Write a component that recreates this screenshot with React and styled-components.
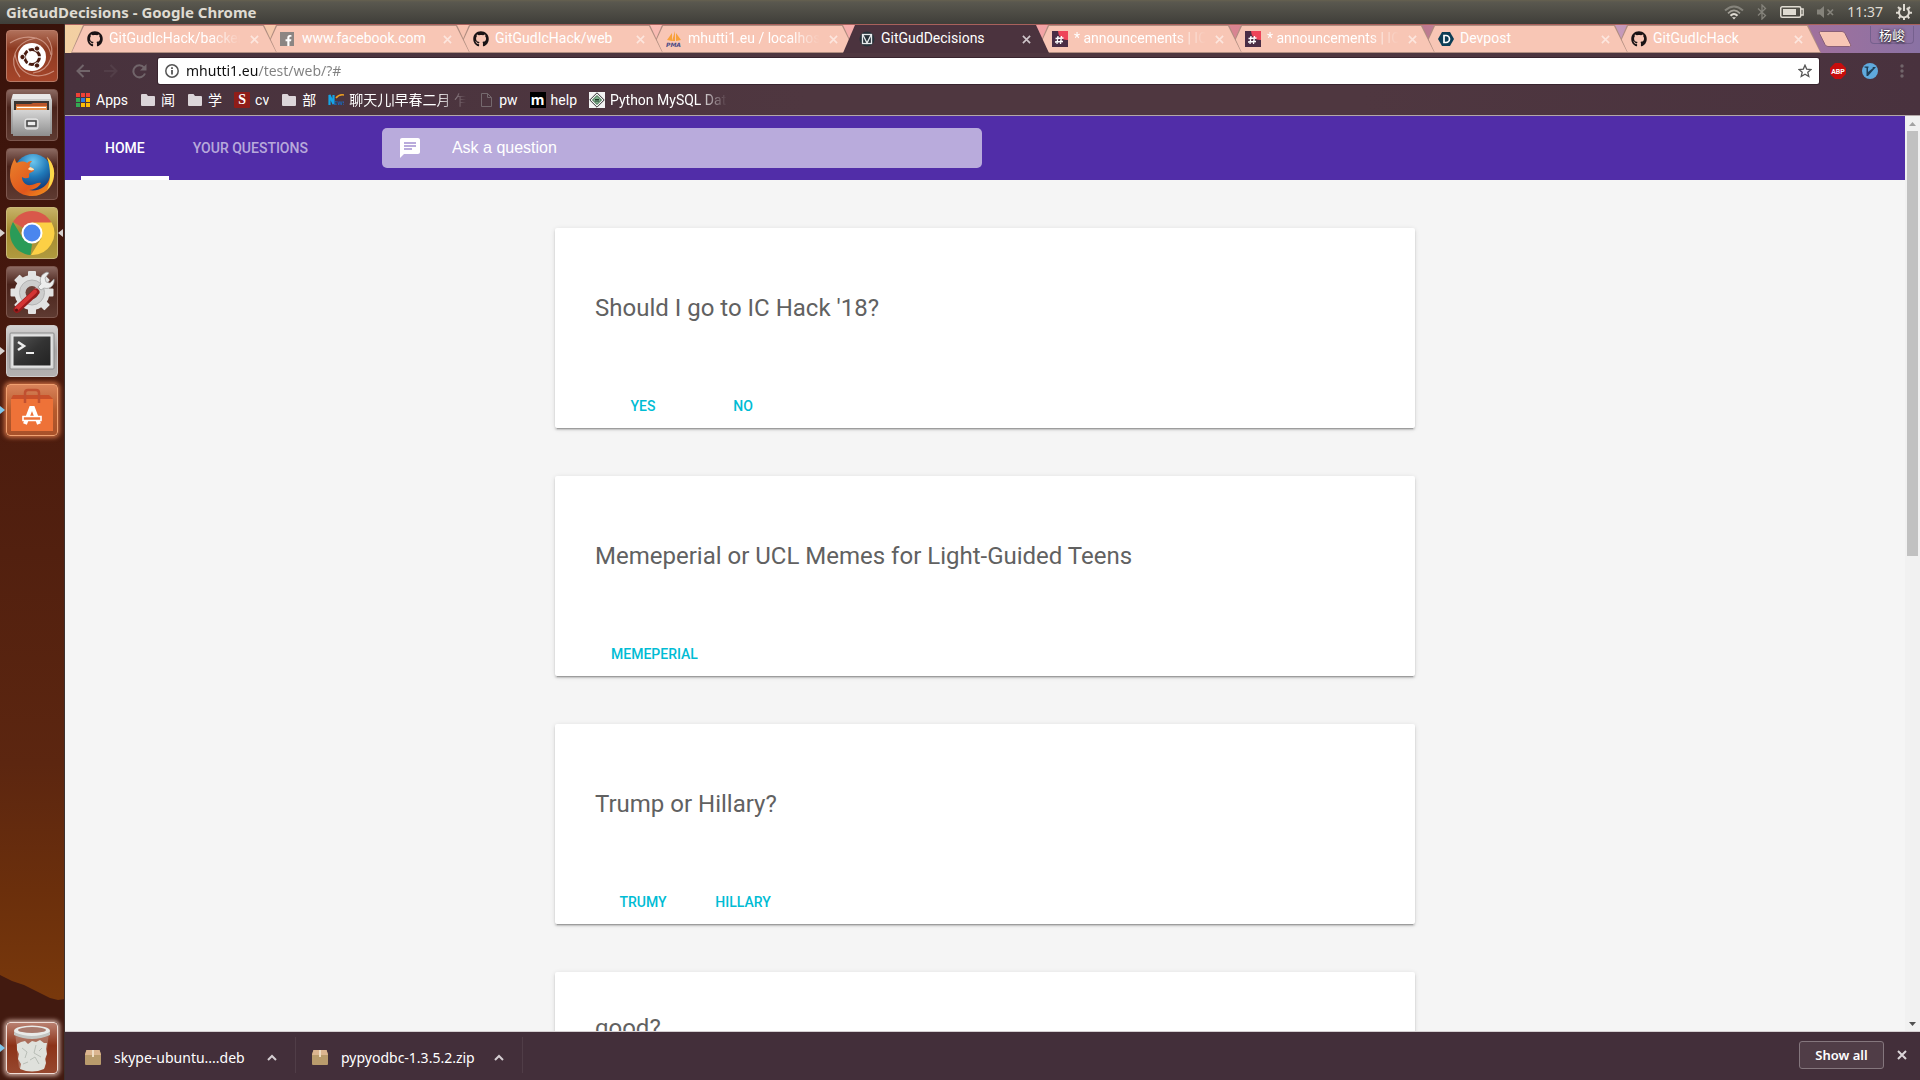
import React from 'react';
import styled, { createGlobalStyle, css } from 'styled-components';
import { FaGithub, FaFacebookF } from 'react-icons/fa';

const sans = '"Noto Sans", "Noto Sans CJK SC", sans-serif';
const ui = 'Roboto, "Noto Sans CJK SC", sans-serif';

const GlobalStyle = createGlobalStyle`
  *, *::before, *::after { box-sizing: border-box; }
  body { margin: 0; background: #3b140a; }
  button { margin: 0; padding: 0; border: 0; background: none; font: inherit; color: inherit; cursor: pointer; }
  a { color: inherit; text-decoration: none; }
  svg { display: block; }
`;

const Desktop = styled.div`
  display: flex;
  flex-direction: column;
  height: 100vh;
  overflow: hidden;
  font-family: ${sans};
`;

/* ---------- Top panel ---------- */

const TopPanel = styled.header`
  display: flex;
  align-items: center;
  justify-content: space-between;
  flex: none;
  height: 24px;
  padding: 0 8px 0 6px;
  background: linear-gradient(#66614f 0, #5a584f 2px, #3f3e39 100%);
  color: #dfdbd2;
`;

const WindowTitle = styled.h1`
  margin: 0;
  font-size: 15px;
  font-weight: 700;
  line-height: 22px;
`;

const Tray = styled.div`
  display: flex;
  align-items: center;
  gap: 13px;
  font-size: 14px;
  line-height: 24px;
`;

/* ---------- Launcher ---------- */

const Body = styled.div`
  display: flex;
  flex: 1;
  min-height: 0;
`;

const Launcher = styled.nav`
  display: flex;
  flex-direction: column;
  justify-content: space-between;
  flex: none;
  width: 65px;
  border-right: 1px solid #3c302e;
  background: linear-gradient(#38120a 0, #45180e 25%, #52200f 50%, #5c2610 70%, #6b2f0c 82%, #78380c 92%);
`;

const LauncherList = styled.div`
  display: flex;
  flex-direction: column;
  gap: 7px;
  padding-top: 6px;
`;

const LauncherFoot = styled.div`
  padding: 47px 0 6px;
  background: #421a10;
  clip-path: polygon(0 0, 12px 6px, 24px 10px, 38px 17px, 50px 23px, 58px 25px, 65px 24px, 65px 100%, 0 100%);
`;

const LauncherSlot = styled.div`
  display: grid;
  grid-template-columns: 6px 52px 6px;
  align-items: center;
`;

const Pip = styled.span`
  width: 5px;
  height: 8px;
  background: ${p => p.$color || 'transparent'};
  clip-path: ${p => (p.$right ? 'polygon(100% 0, 100% 100%, 0 50%)' : 'polygon(0 0, 100% 50%, 0 100%)')};
`;

const tiles = {
  ubuntu: ['linear-gradient(#b0705a, #8e3b22 35%, #a5452a)', '#b87a66'],
  dark: ['linear-gradient(#8c6a62, #4a231b 35%, #5e3a31)', '#7d574e'],
  chrome: ['linear-gradient(#c7b268, #a58a30 45%, #b09a3e)', '#c9b878'],
  light: ['linear-gradient(#d4d2d2, #a9a6a6 50%, #b4b1b1)', '#cfcccc'],
  orange: ['linear-gradient(#d9835a, #b65a2c 50%, #a8512a)', '#f0a070'],
  trash: ['linear-gradient(#b98070, #8c3218 45%, #97482f)', '#f0ddd6'],
};

const LauncherTile = styled.button`
  display: grid;
  place-items: center;
  width: 52px;
  height: 52px;
  border: 1px solid ${p => tiles[p.$tile][1]};
  border-radius: 4px;
  background: ${p => tiles[p.$tile][0]};
  ${p => p.$glow && css`box-shadow: 0 0 4px 2px ${p.$glow};`}
`;

/* ---------- Browser window ---------- */

const Browser = styled.div`
  display: flex;
  flex-direction: column;
  flex: 1;
  min-width: 0;
`;

const TabStrip = styled.div`
  display: flex;
  flex: none;
  height: 29px;
  padding-left: 6px;
  border-top: 1px solid #a8615c;
  background: linear-gradient(90deg, #f3d0a2 0, #f5c8ab 11%, #fabdb4 30%, #f2a3a5 53%, #d98592 63%, #bc788e 73%, #cfa8c6 81%, #a8709a 92%, #8a72a4 100%);
`;

const Tab = styled.div`
  position: relative;
  z-index: ${p => p.$z};
  display: flex;
  flex: 0 1 206px;
  align-items: center;
  gap: 6px;
  min-width: 0;
  margin-right: -13px;
  padding: 0 16px;
  color: #fff;
  font-family: ${ui};
  font-size: 14px;
  line-height: 24px;

  &::before, &::after {
    content: '';
    position: absolute;
    inset: 0;
    z-index: -1;
    clip-path: polygon(12px 0, calc(100% - 13px) 0, 100% 100%, 0 100%);
    background: ${p => (p.$active ? '#4b333e' : '#b08d80')};
  }
  &::after {
    inset: ${p => (p.$active ? '0 1px' : '1px')};
    background: ${p => (p.$active ? '#4b333e' : '#f8c6b5')};
  }
`;

const fade = css`
  mask-image: linear-gradient(90deg, #000 calc(100% - 30px), transparent);
`;

const TabTitle = styled.span`
  flex: 1;
  min-width: 0;
  padding-bottom: 3px;
  overflow: hidden;
  white-space: nowrap;
  ${p => p.$fade && fade}
`;

const TabClose = styled.button`
  display: grid;
  place-items: center;
  width: 14px;
  height: 14px;
  color: ${p => (p.$active ? '#cfc6ca' : '#fde6de')};
`;

const NewTab = styled.button`
  align-self: center;
  width: 34px;
  height: 16px;
  margin-left: 10px;
`;

const Profile = styled.button`
  align-self: flex-start;
  height: 18px;
  margin: 1px 6px 0 auto;
  padding: 0 8px;
  border: 1px solid #75608e;
  border-top: 0;
  border-radius: 0 0 4px 4px;
  color: #fff;
  font-size: 13px;
  line-height: 16px;
  text-shadow: 0 0 3px #222, 0 1px 2px #222;
`;

const Chrome = styled.div`
  display: flex;
  flex-direction: column;
  flex: none;
  gap: 4px;
  height: 63px;
  padding-top: 5px;
  border-bottom: 1px solid #b3a8a8;
  background: linear-gradient(90deg, #48323d 0, #4f3740 40%, #4f3740 70%, #49323e 100%);
`;

const Toolbar = styled.div`
  display: flex;
  align-items: center;
  gap: 16px;
  height: 26px;
  padding: 0 10px;
`;

const NavButtons = styled.div`
  display: flex;
  gap: 12px;
`;

const IconButton = styled.button`
  display: grid;
  place-items: center;
  width: 16px;
  height: 16px;
  color: ${p => (p.$bright ? '#dcd6d9' : '#71656a')};
  opacity: ${p => (p.$dim ? 0.25 : 1)};
`;

const Omnibox = styled.label`
  display: flex;
  flex: 1;
  align-items: center;
  gap: 7px;
  min-width: 0;
  height: 26px;
  margin: 0 -5px;
  padding: 0 7px;
  border-radius: 2px;
  background: #fff;
  box-shadow: 0 0 0 1px #38242e;
`;

const Address = styled.input`
  flex: 1;
  min-width: 0;
  padding: 0;
  border: 0;
  outline: 0;
  background: linear-gradient(90deg, #111 72px, #808080 72px);
  background-clip: text;
  color: transparent;
  font: 14px/24px ${sans};
`;

const Bookmarks = styled.nav`
  display: flex;
  gap: 12px;
  height: 24px;
  padding-left: 10px;
`;

const Bookmark = styled.a`
  display: flex;
  align-items: center;
  gap: 5px;
  color: #fff;
  font-family: ${ui};
  font-size: 14px;
  line-height: 24px;
`;

const BookmarkIcon = styled.span`
  display: grid;
  place-items: center;
  width: 16px;
  height: 16px;
`;

const BookmarkText = styled.span`
  max-width: 117px;
  overflow: hidden;
  white-space: nowrap;
  ${p => p.$fade && fade}
`;

/* ---------- Web page ---------- */

const Viewport = styled.div`
  display: flex;
  flex: 1;
  min-height: 0;
  background: #f5f5f5;
`;

const Page = styled.div`
  flex: 1;
  min-width: 0;
  overflow: hidden;
  font-family: Roboto, sans-serif;
`;

const PageHeader = styled.header`
  display: flex;
  align-items: center;
  height: 64px;
  padding-left: 16px;
  background: #512da8;
`;

const PageTab = styled.a`
  display: flex;
  align-items: center;
  height: 64px;
  padding: 4px 24px 0;
  border-bottom: 4px solid ${p => (p.$active ? '#fff' : 'transparent')};
  color: ${p => (p.$active ? '#fff' : 'rgba(255, 255, 255, 0.6)')};
  font-size: 14px;
  font-weight: 500;
  line-height: 20px;
  text-transform: uppercase;
`;

const Search = styled.label`
  display: flex;
  align-items: center;
  gap: 30px;
  flex: 0 1 600px;
  height: 40px;
  margin-left: 50px;
  padding: 0 16px;
  border-radius: 5px;
  background: rgba(255, 255, 255, 0.6);
  color: #fff;
`;

const SearchInput = styled.input`
  flex: 1;
  min-width: 0;
  padding: 0;
  border: 0;
  outline: 0;
  background: none;
  color: #fff;
  font: 16px/20px "Liberation Sans", sans-serif;
  &::placeholder { color: #fff; opacity: 1; }
`;

const CardList = styled.main`
  display: flex;
  flex-direction: column;
  gap: 48px;
  width: 860px;
  max-width: 100%;
  margin: 0 auto;
  padding: 48px 0;
`;

const Card = styled.article`
  display: flex;
  flex-direction: column;
  justify-content: flex-end;
  min-height: 200px;
  padding: 16px 40px 4px;
  border-radius: 2px;
  background: #fff;
  box-shadow: 0 2px 2px 0 rgba(0, 0, 0, 0.14), 0 3px 1px -2px rgba(0, 0, 0, 0.2), 0 1px 5px 0 rgba(0, 0, 0, 0.12);
`;

const Question = styled.h2`
  min-height: ${p => p.$lines * 24}px;
  margin: 0 0 68px;
  color: #616161;
  font-size: 24px;
  font-weight: 400;
  line-height: 24px;
`;

const Answers = styled.div`
  display: flex;
  gap: 4px;
  min-height: 36px;
`;

const Answer = styled.button`
  min-width: 96px;
  height: 36px;
  padding: 0 16px;
  border-radius: 2px;
  color: #00bcd4;
  font-size: 14px;
  font-weight: 500;
  text-transform: uppercase;
`;

const Scrollbar = styled.div`
  display: flex;
  flex-direction: column;
  flex: none;
  width: 15px;
  background: #f1f1f1;
`;

const ScrollArrow = styled.button`
  display: grid;
  place-items: center;
  height: 15px;
  color: ${p => (p.$off ? '#a3a3a3' : '#505050')};
`;

const ScrollTrack = styled.div`
  flex: 1;
  padding: 0 2px;
`;

const ScrollThumb = styled.div`
  height: 48%;
  background: #c1c1c1;
`;

/* ---------- Download shelf ---------- */

const Shelf = styled.footer`
  display: flex;
  align-items: center;
  flex: none;
  height: 49px;
  padding: 0 10px 2px 0;
  border-top: 1px solid #d5cfd1;
  background: #432f3a;
  color: #fff;
  font-size: 14px;
`;

const Download = styled.button`
  display: flex;
  align-items: center;
  gap: 13px;
  width: ${p => (p.$first ? 231 : 227)}px;
  height: 36px;
  padding: 4px 18px 0 ${p => (p.$first ? 20 : 16)}px;
  border-right: 1px solid #503d47;
  text-align: left;
`;

const FileName = styled.span`
  flex: 1;
  white-space: nowrap;
`;

const ShowAll = styled.button`
  width: 85px;
  height: 28px;
  margin: 0 10px 0 auto;
  border: 1px solid #84767d;
  border-radius: 3px;
  background: #503d47;
  font-weight: 600;
  font-size: 13px;
`;

/* ---------- Icons ---------- */

const Cross = ({ size = 10, weight = 2 }) => (
  <svg width={size} height={size} viewBox="0 0 10 10" stroke="currentColor" strokeWidth={weight} aria-hidden="true">
    <path d="M1 1l8 8M9 1l-8 8" />
  </svg>
);

const Wifi = () => (
  <svg width="20" height="16" viewBox="0 0 20 16" fill="none" strokeWidth="2">
    <path d="M1 6.500Q10-1.500 19 6.500" stroke="#85837b" />
    <path d="M4 9.300Q10 3.500 16 9.300" stroke="#a5a299" strokeWidth="1.600" />
    <path d="M6.500 11.800Q10 8 13.500 11.800" stroke="#dfdbd2" />
    <path d="M8 13.300h4L10 15.500z" fill="#dfdbd2" stroke="none" />
  </svg>
);
const Bluetooth = () => (
  <svg width="10" height="16" viewBox="0 0 10 16" fill="none" stroke="#85837b" strokeWidth="1.300">
    <path d="M1 4.500l7.500 7L5 15V1l3.500 3.500-7.500 7" />
  </svg>
);
const Battery = () => (
  <svg width="24" height="14" viewBox="0 0 24 14">
    <rect x="0.750" y="1.750" width="20" height="10.500" rx="1.500" fill="none" stroke="#dfdbd2" strokeWidth="1.500" />
    <path d="M21 4h2.200v6H21" fill="none" stroke="#dfdbd2" strokeWidth="1.300" />
    <rect x="3" y="4" width="13" height="6" fill="#dfdbd2" />
  </svg>
);
const Muted = () => (
  <svg width="17" height="12" viewBox="0 0 17 12" fill="#85837b">
    <path d="M0 3.500h3L7 0v12L3 8.500H0z" />
    <path d="M10.500 3.500l5.500 5.500M16 3.500l-5.500 5.500" stroke="#85837b" strokeWidth="1.700" />
  </svg>
);
const Power = () => (
  <svg width="16" height="16" viewBox="0 0 16 16" fill="none" stroke="#dfdbd2" strokeWidth="2">
    <path d="M5.300 4.200A5 5 0 1 0 10.700 4.200" />
    <path d="M8 0v7" />
    <path d="M3.800 4.800L2 3M12.200 4.800L14 3M3 8.800H0M16 8.800h-3M4.400 12.200L2.800 14.300M11.600 12.200l1.600 2.100M8 13.500V16" />
  </svg>
);

const UbuntuIcon = () => (
  <svg width="50" height="50" viewBox="0 0 50 50" fill="none">
    <path d="M3 12C18 2 40 4 44 24M47 40C30 50 10 44 8 22M13 46C0 30 8 10 30 7M40 6c10 14 4 34-14 36" stroke="#dba898" strokeWidth="1.200" opacity=".75" />
    <circle cx="25" cy="26" r="14" fill="#fff" />
    <circle cx="25" cy="26" r="7.500" stroke="#4a1c10" strokeWidth="3" />
    <path d="M25 26l13 0M25 26l-7-12M25 26l-7 12" stroke="#fff" strokeWidth="1.500" />
    <circle cx="25" cy="26" r="5.500" fill="#fff" />
    {[[15.5, 26], [30, 17.5], [30, 34.5]].map(([x, y]) => (
      <circle key={y} cx={x} cy={y} r="2.700" fill="#4a1c10" stroke="#fff" />
    ))}
  </svg>
);
const FilesIcon = () => (
  <svg width="44" height="46" viewBox="0 0 44 46">
    <defs>
      <linearGradient id="cab" x1="0" x2="0" y1="0" y2="1"><stop stopColor="#d6d6d6" /><stop offset="1" stopColor="#8e8e8e" /></linearGradient>
    </defs>
    <path d="M3 2h37l2 6v34H1V8z" fill="url(#cab)" />
    <path d="M3 2h37l1 5H2z" fill="#e8e8e8" />
    <rect x="4" y="9" width="35" height="12" fill="#3a3431" />
    <path d="M6 12h15l2-1h14v10H6z" fill="#b9552a" />
    <path d="M6 14h31v6H6z" fill="#eb9350" />
    <path d="M7 15h29v1H7z" fill="#fff" />
    <path d="M3 18h37v26H3z" fill="url(#cab)" />
    <rect x="15" y="27" width="13" height="10" rx="2" fill="#c9c9c9" stroke="#eee" />
    <rect x="17" y="29" width="9" height="5" fill="#eee" stroke="#444" strokeWidth="1.500" />
  </svg>
);
const FirefoxIcon = () => (
  <svg width="46" height="46" viewBox="0 0 46 46">
    <defs>
      <radialGradient id="globe" cx=".5" cy=".2" r=".8"><stop stopColor="#6cc6ee" /><stop offset=".5" stopColor="#1f78b8" /><stop offset="1" stopColor="#12306e" /></radialGradient>
      <linearGradient id="fox" x2="1" y2="1"><stop stopColor="#e8832c" /><stop offset=".6" stopColor="#e2571c" /><stop offset="1" stopColor="#f2a01e" /></linearGradient>
    </defs>
    <circle cx="24" cy="22" r="19" fill="url(#globe)" />
    <path d="M38 6c5 5 8 12 7 19-1 12-10 20-22 20C10 45 1 36 1 24 1 17 3 12 6 7c0 3 1 4 2 5 3-2 8-2 10 0 2-2 4-2 5-2-2 2-3 4-2 6 2 1 4 1 4 3 0 2-4 2-5 4 0 2 1 4-2 4-3 1-4-1-5-1 0 5 4 9 9 8 4 0 6-3 10-2-2 4-7 7-12 7 10 2 19-4 21-13 1-6 0-13-3-20z" fill="url(#fox)" />
    <path d="M38 6c5 5 8 12 7 19-1 6-3 10-7 14 4-8 4-22 0-33z" fill="#fbd84a" />
    <path d="M21 16c2 1 4 1 4 3-3 1-5 0-6-1z" fill="#fce3b8" />
  </svg>
);
const ChromeIcon = () => (
  <svg width="46" height="46" viewBox="0 0 46 46">
    <path d="M23 23L4 12A22 22 0 0 1 42 12z" fill="#d9584a" />
    <path d="M23 12.500h19.600A22 22 0 0 1 22 45L32.500 28z" fill="#fcd045" />
    <path d="M4 12l10 16.500L23 34l-1.500 11A22 22 0 0 1 4 12z" fill="#2a9b58" />
    <circle cx="23" cy="23" r="10.500" fill="#fff" />
    <circle cx="23" cy="23" r="8.500" fill="#4a86ee" />
  </svg>
);
const SettingsIcon = () => (
  <svg width="48" height="48" viewBox="0 0 48 48">
    <g fill="#e2e2e2">
      {[0, 45, 90, 135].map(a => (
        <rect key={a} x="20" y="3" width="8" height="43" rx="1" transform={`rotate(${a} 24 24.500)`} />
      ))}
      <circle cx="24" cy="24.500" r="17.500" />
    </g>
    <circle cx="24" cy="24.500" r="12.500" fill="#cdcdcd" stroke="#b4b4b4" />
    <circle cx="24" cy="24.500" r="6.500" fill="#6a4038" />
    <path d="M27 24L37 14" stroke="#c4c4c4" strokeWidth="5" />
    <path d="M33 16c-2-5 0-10 6-12l2 1-4 5 1 4 4 1 4-4c1 6-4 11-10 9l-3 2-3-3z" fill="#ededed" stroke="#999" strokeWidth=".7" />
    <path d="M9 41.500L28 24" stroke="#991c1c" strokeWidth="7" strokeLinecap="round" />
    <path d="M9 40.500L27 23.500" stroke="#d43434" strokeWidth="4" strokeLinecap="round" />
    <circle cx="8.500" cy="42" r="1.500" fill="#5d1010" />
  </svg>
);
const TerminalIcon = () => (
  <svg width="46" height="40" viewBox="0 0 46 40">
    <defs>
      <linearGradient id="term" x2="1" y2="1"><stop stopColor="#555" /><stop offset=".5" stopColor="#333" /><stop offset="1" stopColor="#222" /></linearGradient>
    </defs>
    <rect x="1" y="2" width="44" height="36" rx="1" fill="#d8d8d8" stroke="#8a8a8a" />
    <rect x="4" y="5" width="38" height="30" fill="url(#term)" stroke="#eee" />
    <path d="M9 11l6 4-6 4" fill="none" stroke="#eee" strokeWidth="2.500" />
    <path d="M17 22h8" stroke="#eee" strokeWidth="2" />
  </svg>
);
const SoftwareIcon = () => (
  <svg width="44" height="44" viewBox="0 0 44 44">
    <path d="M3 7h36l4 4v30H1V11z" fill="#c9502a" />
    <path d="M1 11h42v32H1z" fill="#ee7238" />
    <path d="M15 15V5c0-2 1-3 3-3h8c2 0 3 1 3 3v10" fill="none" stroke="#c05030" strokeWidth="2.500" />
    <path d="M15 36l6-16h2l6 16" fill="none" stroke="#fff" strokeWidth="4" />
    <path d="M13 28.500h18v4H13z" fill="#ee7238" stroke="#fff" strokeWidth="1.600" />
  </svg>
);
const TrashIcon = () => (
  <svg width="40" height="48" viewBox="0 0 40 48">
    <path d="M3 8h34l-4 36q-13 4-26 0z" fill="#b98a7c" opacity=".6" />
    <path d="M5 20l4-2 4-1 3 3 4-3 4 1 4-2 4 3 3 0-1 6 1 5-2 5 1 4-2 6q-12 5-24 0l1-5-3-5 1-5-2-4z" fill="#dfe1dc" />
    <path d="M10 24l5 4-2 6M24 21l-2 8 7 4M18 36l5-3 4 7M11 40l5-2M30 24l-3 3" stroke="#b9beb7" strokeWidth="1" fill="none" />
    <ellipse cx="20" cy="7" rx="18" ry="5.500" fill="#e9eae8" />
    <ellipse cx="20" cy="6" rx="14" ry="3" fill="#a8796c" />
    <path d="M2 8q18 8 36 0v3q-18 8-36 0z" fill="#c3c5c2" />
  </svg>
);

const FacebookTile = styled.span`
  display: grid;
  place-items: end;
  width: 14px;
  height: 14px;
  margin-right: 2px;
  background: #8b8583;
  color: #fff;
`;
const GithubMark = () => <FaGithub size={16} color="#1a1315" />;
const FacebookMark = () => <FacebookTile><FaFacebookF size={11} /></FacebookTile>;
const PmaMark = () => (
  <svg width="16" height="16" viewBox="0 0 16 16">
    <path d="M1 9L6 2v8zM6 10L9 0v10zM10 10V2l5 7z" fill="#f7a13a" />
    <text x="0" y="15.500" fontSize="6" fontWeight="700" fontStyle="italic" fill="#4a4a86" fontFamily="DejaVu Sans">PMA</text>
  </svg>
);
const DecisionsMark = () => (
  <svg width="16" height="16" viewBox="0 0 16 16">
    <circle cx="8" cy="8" r="7.500" fill="#27323a" />
    <rect x="3.500" y="3.500" width="9" height="9" fill="none" stroke="#e6eaec" strokeWidth="1.300" />
    <path d="M4 4l4 8 4-8" fill="none" stroke="#e6eaec" strokeWidth="1.300" />
  </svg>
);
const SlackMark = () => (
  <svg width="16" height="16" viewBox="0 0 16 16">
    <path d="M0 0h16v16H0z" fill="#4a2d45" />
    <path d="M6 0h10v9A9 9 0 0 1 6 0z" fill="#ee4459" />
    <path d="M6 5L5 13M9.500 5l-1 8M3.500 7.500l8-.5M3 11l8-.5" stroke="#fff" strokeWidth="1.300" />
  </svg>
);
const DevpostMark = () => (
  <svg width="16" height="16" viewBox="0 0 16 16">
    <path d="M4 1h8l4 7-4 7H4L0 8z" fill="#0b3d55" />
    <path d="M6 4.500h2a3.500 3.500 0 0 1 0 7H6z" fill="none" stroke="#fff" strokeWidth="1.700" />
  </svg>
);

const AppsMark = () => (
  <svg width="14" height="14" viewBox="0 0 14 14">
    {['#ef4136', '#ef4136', '#ef4136', '#34a853', '#2f7de1', '#fbbc05', '#34a853', '#fbbc05', '#fbbc05'].map((c, i) => (
      <rect key={i} x={(i % 3) * 5} y={Math.floor(i / 3) * 5} width="4" height="4" fill={c} />
    ))}
  </svg>
);
const FolderMark = () => (
  <svg width="14" height="12" viewBox="0 0 14 12"><path d="M1 0h4.500l1.500 2h6q1 0 1 1v8q0 1-1 1H1q-1 0-1-1V1q0-1 1-1z" fill="#dcd5d9" /></svg>
);
const PageMark = () => (
  <svg width="11" height="14" viewBox="0 0 11 14" fill="none" stroke="#75696e"><path d="M.5.5h6l4 4v9H.5zM6.500.5v4h4" /></svg>
);
const Square = styled.span`
  display: grid;
  place-items: center;
  width: 16px;
  height: 16px;
  border-radius: ${p => p.$radius || 0}px;
  background: ${p => p.$bg};
  color: #fff;
  font: 700 14px/14px ${p => p.$font};
`;
const CvMark = () => <Square $bg="#8f1d18" $radius={1} $font='"Liberation Serif", serif'>S</Square>;
const HelpMark = () => <Square $bg="#000" $font='"Noto Sans", sans-serif'>m</Square>;
const NewsMark = () => (
  <svg width="16" height="14" viewBox="0 0 16 14">
    <path d="M1.500 12V2l4 9V2" fill="none" stroke="#16a5e6" strokeWidth="2.200" />
    <path d="M8 5Q11 1 16 2" stroke="#f0a020" strokeWidth="1.500" fill="none" />
    <text x="6" y="12" fontSize="5" fontWeight="700" fill="#1766b5" fontFamily="DejaVu Sans">EWS</text>
  </svg>
);
const PythonMark = () => (
  <svg width="16" height="16" viewBox="0 0 16 16">
    <path d="M0 0h16v16H0z" fill="#f4f4f4" />
    <path d="M8 .8L15.200 8 8 15.200.8 8z" fill="none" stroke="#333" />
    <path d="M8 3.500L12.500 8 8 12.500 3.500 8z" fill="#7fae8c" stroke="#3c6b48" />
    <path d="M6 7.500h4M6 9h4" stroke="#1d3a26" />
  </svg>
);

const PackageMark = () => (
  <svg width="16" height="15" viewBox="0 0 16 15">
    <path d="M1.500 0h13L16 4v10q0 1-1 1H1q-1 0-1-1V4z" fill="#b99b6c" />
    <path d="M1.500 0h13L16 5H0z" fill="#dcb590" />
    <path d="M7 0h2v7H7z" fill="#f0ddc4" />
  </svg>
);
const Caret = () => (
  <svg width="10" height="7" viewBox="0 0 10 7" fill="none" stroke="#d5ced2" strokeWidth="2"><path d="M1 6l4-4 4 4" /></svg>
);

/* ---------- Data ---------- */

const running = '#d8d2cf';
const notified = '#7fc6ea';

const launchers = [
  { name: 'Search your computer', tile: 'ubuntu', Icon: UbuntuIcon },
  { name: 'Files', tile: 'dark', Icon: FilesIcon },
  { name: 'Firefox', tile: 'dark', Icon: FirefoxIcon },
  { name: 'Google Chrome', tile: 'chrome', Icon: ChromeIcon, pip: running, focused: true },
  { name: 'System Settings', tile: 'dark', Icon: SettingsIcon },
  { name: 'Terminal', tile: 'light', Icon: TerminalIcon, pip: running },
  { name: 'Ubuntu Software', tile: 'orange', Icon: SoftwareIcon, pip: notified, glow: '#c4693f' },
];

const tabs = [
  { title: 'GitGudIcHack/backend', Mark: GithubMark, fade: true },
  { title: 'www.facebook.com', Mark: FacebookMark },
  { title: 'GitGudIcHack/web', Mark: GithubMark },
  { title: 'mhutti1.eu / localhost', Mark: PmaMark, fade: true },
  { title: 'GitGudDecisions', Mark: DecisionsMark, active: true },
  { title: '* announcements | IC Hack', Mark: SlackMark, fade: true },
  { title: '* announcements | IC Hack', Mark: SlackMark, fade: true },
  { title: 'Devpost', Mark: DevpostMark },
  { title: 'GitGudIcHack', Mark: GithubMark },
];

const bookmarks = [
  { text: 'Apps', Mark: AppsMark },
  { text: '闻', Mark: FolderMark },
  { text: '学', Mark: FolderMark },
  { text: 'cv', Mark: CvMark },
  { text: '部', Mark: FolderMark },
  { text: '聊天儿|早春二月 乍暖', Mark: NewsMark, fade: true },
  { text: 'pw', Mark: PageMark },
  { text: 'help', Mark: HelpMark },
  { text: 'Python MySQL Database', Mark: PythonMark, fade: true },
];

const questions = [
  { text: "Should I go to IC Hack '18?", answers: ['Yes', 'No'] },
  { text: 'Memeperial or UCL Memes for Light-Guided Teens', answers: ['Memeperial'] },
  { text: 'Trump or Hillary?', answers: ['Trumy', 'Hillary'] },
  { text: 'good?', answers: [], lines: 2 },
];

function LauncherItem({ name, tile, Icon, pip, focused, glow }) {
  return (
    <LauncherSlot>
      <Pip $color={pip} />
      <LauncherTile $tile={tile} $glow={glow} aria-label={name}><Icon /></LauncherTile>
      <Pip $right $color={focused && pip} />
    </LauncherSlot>
  );
}

export default function App() {
  return (
    <Desktop>
      <GlobalStyle />
      <TopPanel>
        <WindowTitle>GitGudDecisions - Google Chrome</WindowTitle>
        <Tray>
          <Wifi />
          <Bluetooth />
          <Battery />
          <Muted />
          <span>11:37</span>
          <Power />
        </Tray>
      </TopPanel>
      <Body>
        <Launcher>
          <LauncherList>
            {launchers.map(l => <LauncherItem key={l.name} {...l} />)}
          </LauncherList>
          <LauncherFoot>
            <LauncherItem name="Trash" tile="trash" Icon={TrashIcon} pip={notified} glow="#c9a59a" />
          </LauncherFoot>
        </Launcher>

        <Browser>
          <TabStrip>
            {tabs.map(({ title, Mark, fade: faded, active }, i) => (
              <Tab key={i} $active={active} $z={active ? 20 : 10 - i}>
                <Mark />
                <TabTitle $fade={faded}>{title}</TabTitle>
                <TabClose $active={active} aria-label="Close tab"><Cross size={9} weight={1.8} /></TabClose>
              </Tab>
            ))}
            <NewTab aria-label="New tab">
              <svg width="34" height="16" viewBox="0 0 34 16">
                <path d="M2.500.5H24q2 0 3 2l5.500 11q1 2-1 2H10q-2 0-3-2L1.500 2.500q-1-2 1-2z" fill="#f8c6b5" stroke="#8a6078" />
              </svg>
            </NewTab>
            <Profile>杨峻</Profile>
          </TabStrip>

          <Chrome>
            <Toolbar>
              <NavButtons>
                <IconButton aria-label="Back">
                  <svg width="14" height="14" viewBox="0 0 14 14" fill="none" stroke="currentColor" strokeWidth="2"><path d="M14 7H1.500M7.500 1l-6 6 6 6" /></svg>
                </IconButton>
                <IconButton $dim aria-label="Forward">
                  <svg width="14" height="14" viewBox="0 0 14 14" fill="none" stroke="currentColor" strokeWidth="2"><path d="M0 7h12.500M6.500 1l6 6-6 6" /></svg>
                </IconButton>
                <IconButton aria-label="Reload">
                  <svg width="15" height="15" viewBox="0 0 15 15" fill="none" stroke="currentColor" strokeWidth="2"><path d="M13 9.500A6 6 0 1 1 12 3.500" /><path d="M14.500 0v6.500H8z" fill="currentColor" stroke="none" /></svg>
                </IconButton>
              </NavButtons>
              <Omnibox>
                <svg width="14" height="14" viewBox="0 0 14 14" fill="none" stroke="#555">
                  <circle cx="7" cy="7" r="6.200" strokeWidth="1.500" />
                  <path d="M7 6v4.500M7 3.300v1.700" strokeWidth="1.800" />
                </svg>
                <Address defaultValue="mhutti1.eu/test/web/?#" aria-label="Address" />
                <svg width="14" height="14" viewBox="0 0 14 14" fill="none" stroke="#555" strokeWidth="1.300">
                  <path d="M7 1.200l1.700 3.900 4.300.4-3.200 2.800 1 4.200L7 10.300l-3.800 2.200 1-4.200L1 5.500l4.300-.4z" />
                </svg>
              </Omnibox>
              <IconButton aria-label="Adblock Plus">
                <svg width="16" height="16" viewBox="0 0 16 16">
                  <path d="M5 0h6l5 5v6l-5 5H5l-5-5V5z" fill="#c60d0d" />
                  <text x="8" y="10.500" fontSize="7" fontWeight="700" textAnchor="middle" fill="#fff" fontFamily="Roboto">ABP</text>
                </svg>
              </IconButton>
              <IconButton aria-label="Vimium">
                <svg width="16" height="16" viewBox="0 0 16 16">
                  <circle cx="8" cy="8" r="8" fill="#5fa9dd" />
                  <path d="M2.500 3.500h4v1l-.5.5v4l5-4-.5-1h3.500L6 13H4.500V5l-2-.5z" fill="#1f3e57" />
                </svg>
              </IconButton>
              <IconButton aria-label="Menu">
                <svg width="4" height="14" viewBox="0 0 4 14" fill="currentColor">
                  <circle cx="2" cy="2" r="1.700" /><circle cx="2" cy="7" r="1.700" /><circle cx="2" cy="12" r="1.700" />
                </svg>
              </IconButton>
            </Toolbar>
            <Bookmarks>
              {bookmarks.map(({ text, Mark, fade: faded }) => (
                <Bookmark key={text} href="#">
                  <BookmarkIcon><Mark /></BookmarkIcon>
                  <BookmarkText $fade={faded}>{text}</BookmarkText>
                </Bookmark>
              ))}
            </Bookmarks>
          </Chrome>

          <Viewport>
            <Page>
              <PageHeader>
                <PageTab $active href="#">Home</PageTab>
                <PageTab href="#">Your questions</PageTab>
                <Search>
                  <svg width="24" height="24" viewBox="0 0 24 24" fill="currentColor">
                    <path d="M20 2H4c-1.100 0-1.990.9-1.990 2L2 22l4-4h14c1.100 0 2-.9 2-2V4c0-1.100-.9-2-2-2zM6 9h12v2H6V9zm8 5H6v-2h8v2zm4-6H6V6h12v2z" />
                  </svg>
                  <SearchInput placeholder="Ask a question" aria-label="Ask a question" />
                </Search>
              </PageHeader>
              <CardList>
                {questions.map(q => (
                  <Card key={q.text}>
                    <Question $lines={q.lines || 1}>{q.text}</Question>
                    <Answers>
                      {q.answers.map(a => <Answer key={a}>{a}</Answer>)}
                    </Answers>
                  </Card>
                ))}
              </CardList>
            </Page>
            <Scrollbar>
              <ScrollArrow $off aria-label="Scroll up">
                <svg width="7" height="4" viewBox="0 0 7 4" fill="currentColor"><path d="M3.500 0L7 4H0z" /></svg>
              </ScrollArrow>
              <ScrollTrack><ScrollThumb /></ScrollTrack>
              <ScrollArrow aria-label="Scroll down">
                <svg width="7" height="4" viewBox="0 0 7 4" fill="currentColor"><path d="M3.500 4L0 0h7z" /></svg>
              </ScrollArrow>
            </Scrollbar>
          </Viewport>

          <Shelf>
            <Download $first><PackageMark /><FileName>skype-ubuntu....deb</FileName><Caret /></Download>
            <Download><PackageMark /><FileName>pypyodbc-1.3.5.2.zip</FileName><Caret /></Download>
            <ShowAll>Show all</ShowAll>
            <IconButton $bright aria-label="Close downloads"><Cross /></IconButton>
          </Shelf>
        </Browser>
      </Body>
    </Desktop>
  );
}
